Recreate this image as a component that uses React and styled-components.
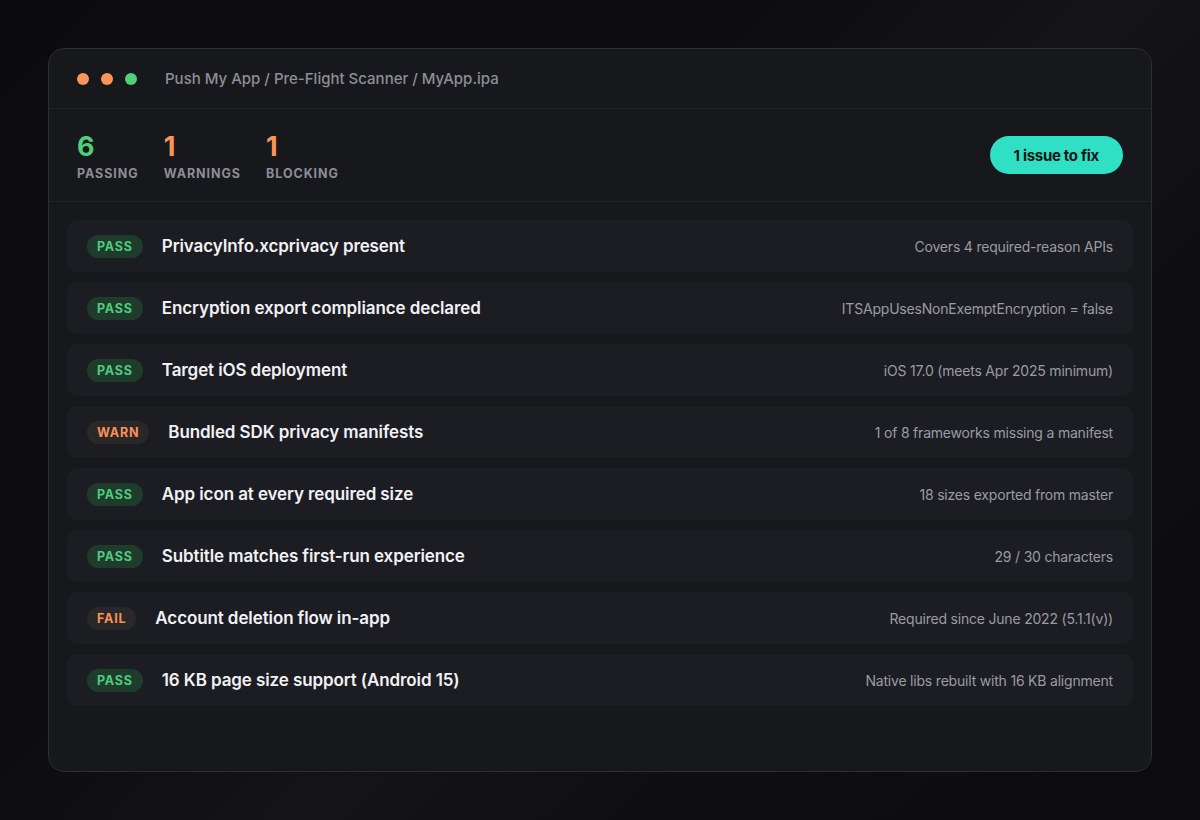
import React from "react";
import styled, { createGlobalStyle } from "styled-components";

const GlobalStyle = createGlobalStyle`
  html, body {
    margin: 0;
    padding: 0;
  }
  body {
    width: 1200px;
    height: 820px;
    overflow: hidden;
    font-family: Inter, "Noto Sans", sans-serif;
    background: linear-gradient(135deg, #0b0b0f 0%, #0d0d11 38%, #131318 55%, #0e0e12 75%, #0c0c10 100%);
    -webkit-font-smoothing: antialiased;
  }
`;

const Page = styled.div`
  box-sizing: border-box;
  width: 1200px;
  height: 820px;
  padding: 48px;
`;

const Window = styled.div`
  box-sizing: border-box;
  height: 724px;
  background: #17181c;
  border: 1px solid #2d2d32;
  border-radius: 16px;
  display: flex;
  flex-direction: column;
  overflow: hidden;
`;

const TitleBar = styled.div`
  height: 59px;
  display: flex;
  align-items: center;
  padding: 0 28px;
  border-bottom: 1px dotted #2c2d33;
`;

const Dots = styled.div`
  display: flex;
  gap: 12px;
  margin-right: 28px;
`;

const Dot = styled.span`
  width: 12px;
  height: 12px;
  border-radius: 50%;
  background: ${(p) => p.color};
`;

const Crumbs = styled.div`
  font-size: 15px;
  font-weight: 500;
  color: #8d8e96;
`;

const StatsBar = styled.div`
  height: 92px;
  display: flex;
  align-items: center;
  justify-content: space-between;
  padding: 0 28px;
  border-bottom: 1px dotted #2c2d33;
`;

const Stats = styled.div`
  display: flex;
  gap: 25px;
  padding-top: 2px;
`;

const Stat = styled.div`
  display: flex;
  flex-direction: column;
`;

const StatValue = styled.div`
  font-size: 27px;
  font-weight: 700;
  line-height: 30px;
  color: ${(p) => p.color};
`;

const StatLabel = styled.div`
  margin-top: 4px;
  font-size: 12.5px;
  font-weight: 700;
  letter-spacing: 0.95px;
  color: #8c8d95;
`;

const FixButton = styled.button`
  height: 38px;
  padding: 0 24px;
  border: none;
  border-radius: 19px;
  background: #2fe0c4;
  color: #0c1614;
  font-family: Inter, sans-serif;
  font-size: 15px;
  font-weight: 700;
  letter-spacing: -0.3px;
`;

const List = styled.div`
  display: flex;
  flex-direction: column;
  gap: 10px;
  padding: 18px;
`;

const Row = styled.div`
  height: 52px;
  display: flex;
  align-items: center;
  padding: 0 20px;
  background: #1c1d23;
  border-radius: 10px;
`;

const Badge = styled.span`
  height: 23px;
  padding: 0 10px;
  display: inline-flex;
  align-items: center;
  border-radius: 12px;
  font-size: 12.5px;
  font-weight: 700;
  letter-spacing: 0.8px;
  color: ${(p) => (p.kind === "PASS" ? "#4fcb7c" : "#fb9257")};
  background: ${(p) => (p.kind === "PASS" ? "#1f3b2c" : "#2a2729")};
`;

const Title = styled.div`
  margin-left: 19px;
  flex: 1;
  font-size: 17px;
  font-weight: 600;
  color: #f1f1f3;
  letter-spacing: -0.1px;
`;

const Detail = styled.div`
  font-size: 14px;
  color: #9a9ba3;
  letter-spacing: -0.2px;
`;

const checks = [
  ["PASS", "PrivacyInfo.xcprivacy present", "Covers 4 required-reason APIs"],
  ["PASS", "Encryption export compliance declared", "ITSAppUsesNonExemptEncryption = false"],
  ["PASS", "Target iOS deployment", "iOS 17.0 (meets Apr 2025 minimum)"],
  ["WARN", "Bundled SDK privacy manifests", "1 of 8 frameworks missing a manifest"],
  ["PASS", "App icon at every required size", "18 sizes exported from master"],
  ["PASS", "Subtitle matches first-run experience", "29 / 30 characters"],
  ["FAIL", "Account deletion flow in-app", "Required since June 2022 (5.1.1(v))"],
  ["PASS", "16 KB page size support (Android 15)", "Native libs rebuilt with 16 KB alignment"],
];

export default function App() {
  return (
    <>
      <GlobalStyle />
      <Page>
        <Window>
          <TitleBar>
            <Dots>
              <Dot color="#fd9457" />
              <Dot color="#fd9457" />
              <Dot color="#4fcf78" />
            </Dots>
            <Crumbs>Push My App / Pre-Flight Scanner / MyApp.ipa</Crumbs>
          </TitleBar>
          <StatsBar>
            <Stats>
              <Stat>
                <StatValue color="#4fcf78">6</StatValue>
                <StatLabel>PASSING</StatLabel>
              </Stat>
              <Stat>
                <StatValue color="#fd9457">1</StatValue>
                <StatLabel>WARNINGS</StatLabel>
              </Stat>
              <Stat>
                <StatValue color="#fd9457">1</StatValue>
                <StatLabel>BLOCKING</StatLabel>
              </Stat>
            </Stats>
            <FixButton>1 issue to fix</FixButton>
          </StatsBar>
          <List>
            {checks.map(([kind, title, detail]) => (
              <Row key={title}>
                <Badge kind={kind}>{kind}</Badge>
                <Title>{title}</Title>
                <Detail>{detail}</Detail>
              </Row>
            ))}
          </List>
        </Window>
      </Page>
    </>
  );
}
